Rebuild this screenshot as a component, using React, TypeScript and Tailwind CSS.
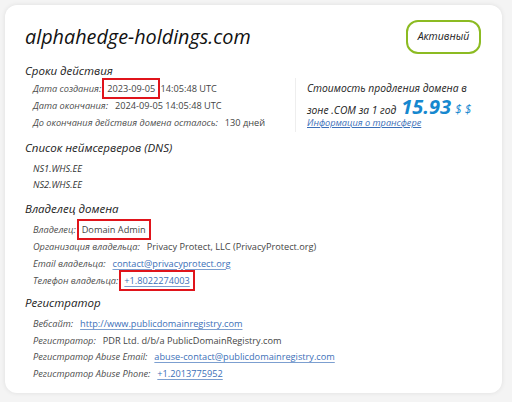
const italic = { fontFamily: '"Open Sans", "Noto Sans", sans-serif' }

function Row({
  label,
  children,
  h = "h-[17px]",
}: {
  label: string
  children: React.ReactNode
  h?: string
}) {
  return (
    <div className={`flex items-center gap-[7px] ${h}`}>
      <span className="text-[9.2px] italic text-[#4d4d4d]">{label}</span>
      <span className="text-[9.2px] text-[#444]">{children}</span>
    </div>
  )
}

function Boxed({ children }: { children: React.ReactNode }) {
  return (
    <span className="-ml-[4px] px-[3px] py-[2px] outline-2 outline-[#e0141b]">
      {children}
    </span>
  )
}

function Link({ children }: { children: React.ReactNode }) {
  return (
    <span className="text-[#3c6fb8] underline decoration-[#7c9fd0] underline-offset-2">
      {children}
    </span>
  )
}

function Heading({ children, mt }: { children: string; mt: string }) {
  return (
    <div className={`${mt} text-[11.5px] italic leading-4 text-[#222]`}>
      {children}
    </div>
  )
}

export default function App() {
  return (
    <div
      className="min-h-[402px] w-[512px] bg-[#f4f4f4] pl-[5px] pt-[5px]"
      style={italic}
    >
      <div className="flex w-[497px] flex-col rounded-[12px] bg-white pb-[11px] pl-[20px] pr-[21px] pt-[15px] shadow-[0_0_5px_rgba(0,0,0,0.09)]">
        <div className="flex h-[34px] items-center justify-between">
          <div className="text-[19.8px] italic text-[#111]">
            alphahedge-holdings.com
          </div>
          <div className="flex h-[34px] w-[75px] items-center justify-center rounded-[12px] border-2 border-[#8cbb22] text-[10.5px] italic text-[#222]">
            Активный
          </div>
        </div>

        <div className="flex">
          <div className="flex-1">
            <Heading mt="mt-[9px]">Сроки действия</Heading>
            <div className="mt-[1px] pl-[8px]">
              <Row label="Дата создания:">
                <Boxed>2023-09-05</Boxed> 14:05:48 UTC
              </Row>
              <Row label="Дата окончания:">2024-09-05 14:05:48 UTC</Row>
              <Row label="До окончания действия домена осталось:">130 дней</Row>
            </div>
          </div>
          <div className="mt-[24px] h-[54px] w-[186px] border-l border-[#eeeeee] pl-[11px] pt-[1px] italic text-[#222]">
            <div className="text-[10.3px] leading-[18px]">
              Стоимость продления домена в
            </div>
            <div className="flex h-[18px] items-baseline text-[10.3px] leading-[18px]">
              <span>зоне .COM за 1 год</span>
              <span className="ml-[5px] text-[20px] font-bold leading-none text-[#1688cf]">
                15.93
              </span>
              <span className="ml-[4px] text-[12px] leading-none text-[#1688cf]">
                $ $
              </span>
            </div>
            <div className="text-[9.2px] leading-4 text-[#3c6fb8] underline">
              Информация о трансфере
            </div>
          </div>
        </div>

        <Heading mt="mt-[8px]">Список неймсерверов (DNS)</Heading>
        <div className="mt-[5px] pl-[8px] text-[9.2px] italic text-[#333]">
          <div className="h-4 leading-4">NS1.WHS.EE</div>
          <div className="h-4 leading-4">NS2.WHS.EE</div>
        </div>

        <Heading mt="mt-[8px]">Владелец домена</Heading>
        <div className="mt-[4px] pl-[8px]">
          <Row label="Владелец:">
            <Boxed>Domain Admin</Boxed>
          </Row>
          <Row label="Организация владельца:">
            Privacy Protect, LLC (PrivacyProtect.org)
          </Row>
          <Row label="Email владельца:">
            <Link>contact@privacyprotect.org</Link>
          </Row>
          <Row label="Телефон владельца:">
            <Boxed>
              <Link>+1.8022274003</Link>
            </Boxed>
          </Row>
        </div>

        <Heading mt="mt-[6px]">Регистратор</Heading>
        <div className="mt-[5px] pl-[8px]">
          <Row label="Вебсайт:" h="h-[16.5px]">
            <Link>http://www.publicdomainregistry.com</Link>
          </Row>
          <Row label="Регистратор:" h="h-[16.5px]">
            PDR Ltd. d/b/a PublicDomainRegistry.com
          </Row>
          <Row label="Регистратор Abuse Email:" h="h-[16.5px]">
            <Link>abuse-contact@publicdomainregistry.com</Link>
          </Row>
          <Row label="Регистратор Abuse Phone:" h="h-[16.5px]">
            <Link>+1.2013775952</Link>
          </Row>
        </div>
      </div>
    </div>
  )
}
